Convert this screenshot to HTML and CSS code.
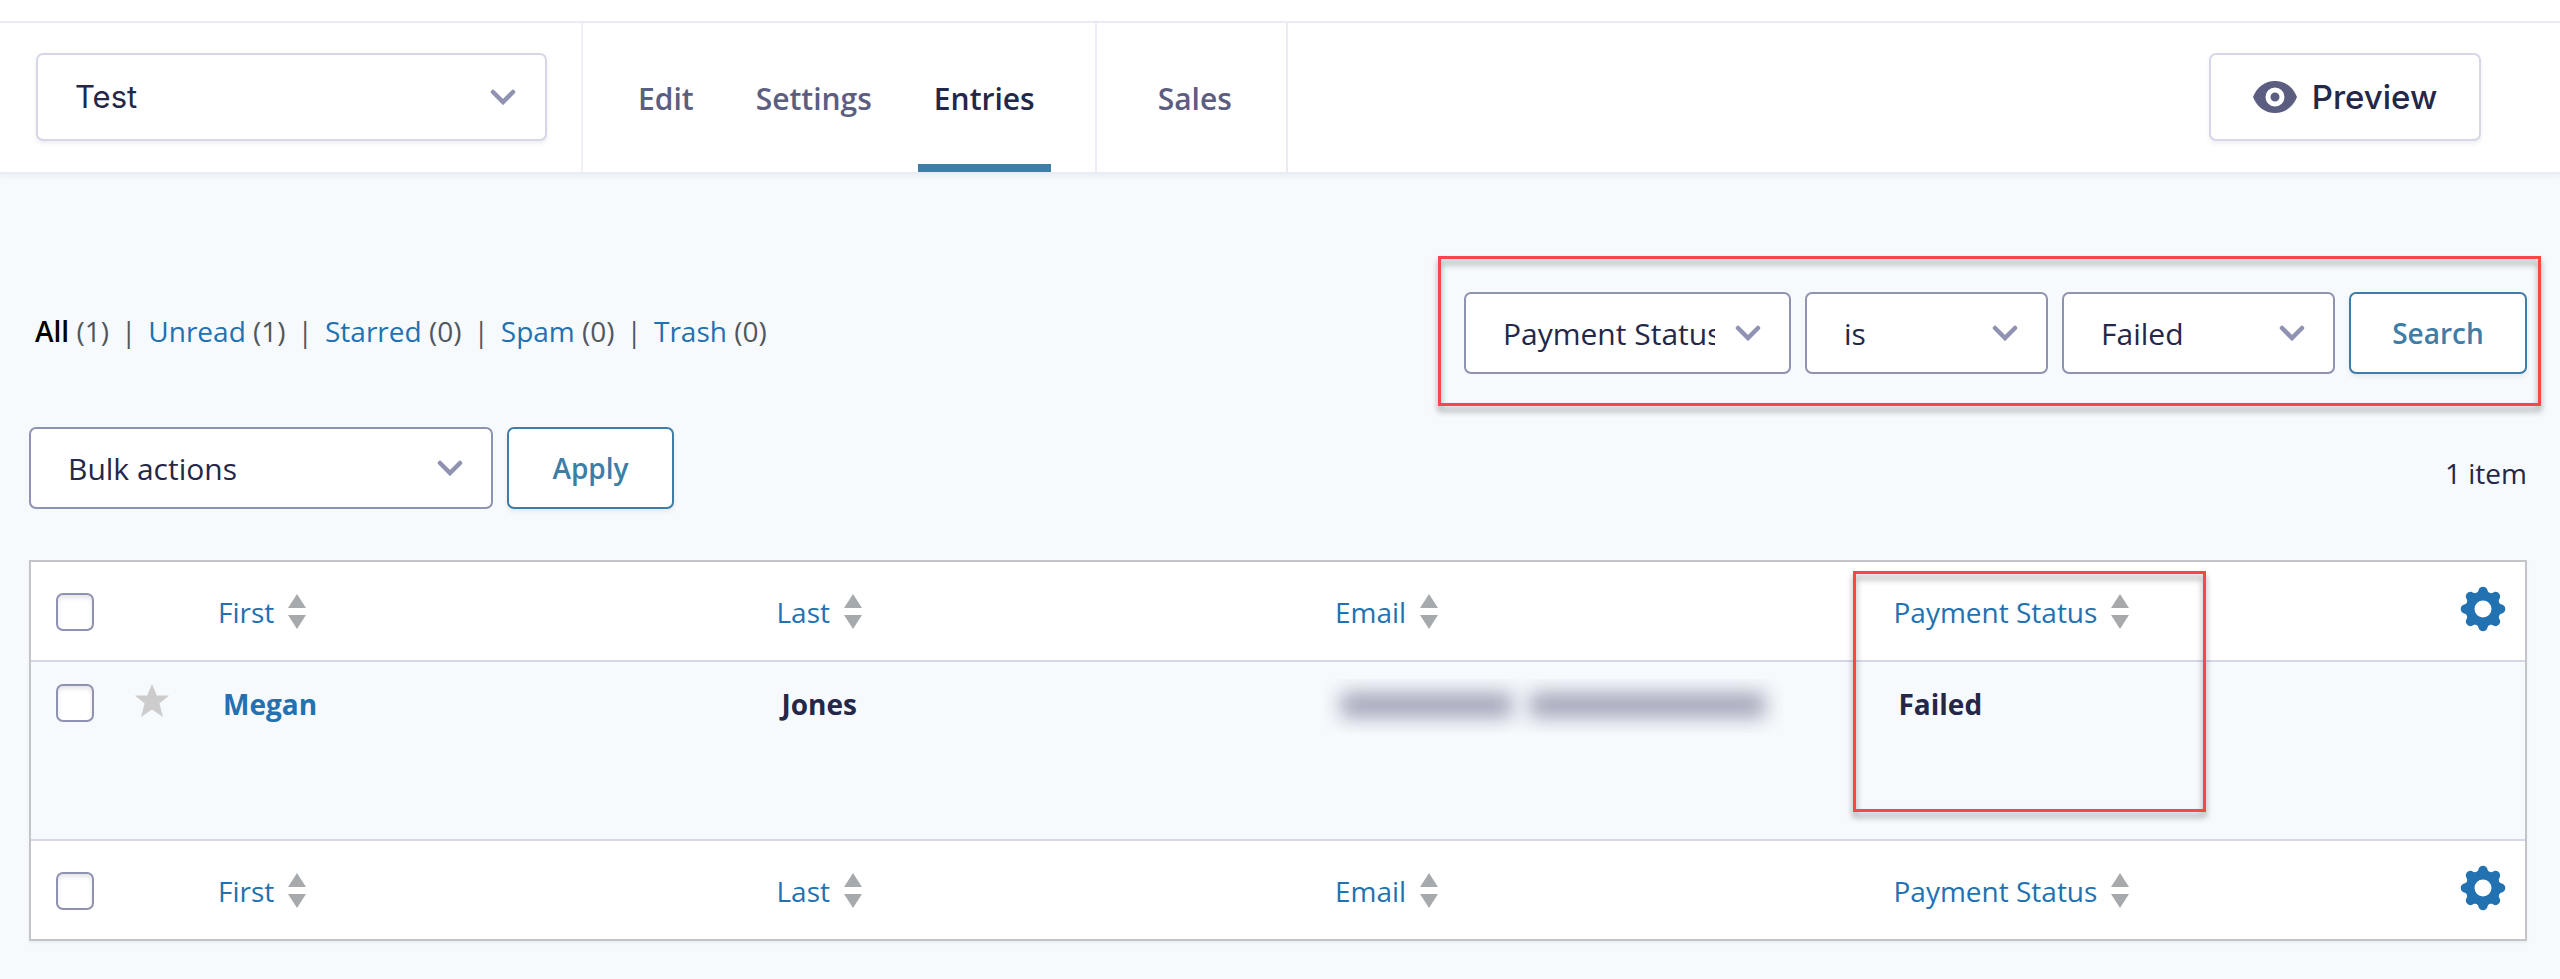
FILE: index.html
```html
<!DOCTYPE html>
<html lang="en">
<head>
<meta charset="utf-8">
<title>Form entries</title>
<link rel="stylesheet" href="styles.css">
</head>
<body>
<svg class="sprite" aria-hidden="true">
  <symbol id="chevron" viewBox="0 0 26 16"><path d="M3 3l10 10L23 3" fill="none" stroke="currentColor" stroke-width="4.500" stroke-linecap="round"/></symbol>
  <symbol id="sort" viewBox="0 0 18 36"><path d="M9 0l9 14H0zM0 21h18L9 35z" fill="currentColor"/></symbol>
  <symbol id="star" viewBox="0 0 34 34"><path d="M17 0l4.800 11.500H34l-9.600 8L28 33l-11-7.500L6 33l3.600-13.500L0 11.500h12.200z" fill="currentColor"/></symbol>
  <symbol id="gear" viewBox="-23 -23 46 46">
    <circle r="13" fill="none" stroke="currentColor" stroke-width="9"/>
    <g id="teeth" fill="currentColor">
      <path id="tooth" d="M-8.500-14.500C-5-16-5-17.500-4.200-19.500C-3-23.200 3-23.200 4.200-19.500C5-17.500 5-16 8.500-14.500L5-12H-5z"/>
      <use href="#tooth" transform="rotate(45)"/><use href="#tooth" transform="rotate(90)"/><use href="#tooth" transform="rotate(135)"/><use href="#tooth" transform="rotate(180)"/><use href="#tooth" transform="rotate(225)"/><use href="#tooth" transform="rotate(270)"/><use href="#tooth" transform="rotate(315)"/>
    </g>
  </symbol>
  <symbol id="eye" viewBox="0 0 44 32"><path fill="currentColor" fill-rule="evenodd" d="M0 16C4 6 12 0 22 0s18 6 22 16c-4 10-12 16-22 16S4 26 0 16zM22 6.500a9.500 9.500 0 1 0 0 19a9.500 9.500 0 1 0 0-19zM22 11.500a4.500 4.500 0 1 1 0 9a4.500 4.500 0 1 1 0-9z"/></symbol>
</svg>

<header class="toolbar">
  <div class="form-switcher">
    <div class="select select-light">
      <select class="select-box" aria-label="Form"><option>Test</option></select>
      <svg class="chevron"><use href="#chevron"/></svg>
    </div>
  </div>
  <nav class="tabs">
    <div class="tab-group">
      <a class="tab" href="#">Edit</a>
      <a class="tab" href="#">Settings</a>
      <a class="tab tab-active" href="#">Entries</a>
    </div>
    <div class="tab-group tab-group-sales"><a class="tab" href="#">Sales</a></div>
  </nav>
  <button class="preview" type="button"><svg class="eye"><use href="#eye"/></svg>Preview</button>
</header>

<main class="content">
  <div class="bar">
    <ul class="views">
      <li class="view"><a class="view-link view-current" href="#">All</a> (1)</li>
      <li class="view"><a class="view-link" href="#">Unread</a> (1)</li>
      <li class="view"><a class="view-link" href="#">Starred</a> (0)</li>
      <li class="view"><a class="view-link" href="#">Spam</a> (0)</li>
      <li class="view"><a class="view-link" href="#">Trash</a> (0)</li>
    </ul>
    <form class="filters">
      <div class="select select-field">
        <select class="select-box" aria-label="Field"><option>Payment Status</option></select>
        <svg class="chevron"><use href="#chevron"/></svg>
      </div>
      <div class="select select-operator">
        <select class="select-box" aria-label="Operator"><option>is</option></select>
        <svg class="chevron"><use href="#chevron"/></svg>
      </div>
      <div class="select select-value">
        <select class="select-box" aria-label="Value"><option>Failed</option></select>
        <svg class="chevron"><use href="#chevron"/></svg>
      </div>
      <button class="action action-search" type="button">Search</button>
    </form>
  </div>

  <div class="bar bulk-bar">
    <div class="bulk">
      <div class="select select-bulk">
        <select class="select-box" aria-label="Bulk actions"><option>Bulk actions</option></select>
        <svg class="chevron"><use href="#chevron"/></svg>
      </div>
      <button class="action action-apply" type="button">Apply</button>
    </div>
    <span class="count">1 item</span>
  </div>

  <div class="table-wrap">
    <table class="entries">
      <colgroup><col class="col-check"><col class="col-star"><col><col><col><col><col class="col-gear"></colgroup>
      <thead>
        <tr>
          <th class="cell"><input class="check" type="checkbox" aria-label="Select all"></th>
          <th class="cell"></th>
          <th class="cell"><a class="sort" href="#">First<svg class="arrows"><use href="#sort"/></svg></a></th>
          <th class="cell"><a class="sort" href="#">Last<svg class="arrows"><use href="#sort"/></svg></a></th>
          <th class="cell"><a class="sort" href="#">Email<svg class="arrows"><use href="#sort"/></svg></a></th>
          <th class="cell status-head"><a class="sort" href="#">Payment Status<svg class="arrows"><use href="#sort"/></svg></a></th>
          <th class="cell cell-gear"><button class="gear-button" type="button" aria-label="Select columns"><svg class="gear"><use href="#gear"/></svg></button></th>
        </tr>
      </thead>
      <tbody>
        <tr class="entry">
          <td class="cell"><input class="check" type="checkbox" aria-label="Select entry"></td>
          <td class="cell"><button class="star-button" type="button" aria-label="Star entry"><svg class="star"><use href="#star"/></svg></button></td>
          <td class="cell value"><a class="entry-link" href="#">Megan</a></td>
          <td class="cell value">Jones</td>
          <td class="cell value"><div class="redacted" role="img" aria-label="Hidden email"><span class="smear smear-short"></span><span class="smear smear-long"></span></div></td>
          <td class="cell value">Failed</td>
          <td class="cell"></td>
        </tr>
      </tbody>
      <tfoot>
        <tr>
          <th class="cell"><input class="check" type="checkbox" aria-label="Select all"></th>
          <th class="cell"></th>
          <th class="cell"><a class="sort" href="#">First<svg class="arrows"><use href="#sort"/></svg></a></th>
          <th class="cell"><a class="sort" href="#">Last<svg class="arrows"><use href="#sort"/></svg></a></th>
          <th class="cell"><a class="sort" href="#">Email<svg class="arrows"><use href="#sort"/></svg></a></th>
          <th class="cell"><a class="sort" href="#">Payment Status<svg class="arrows"><use href="#sort"/></svg></a></th>
          <th class="cell cell-gear"><button class="gear-button" type="button" aria-label="Select columns"><svg class="gear"><use href="#gear"/></svg></button></th>
        </tr>
      </tfoot>
    </table>
  </div>
</main>
</body>
</html>
```
FILE: styles.css
```css
*, *::before, *::after { box-sizing: border-box; }

body {
  margin: 0;
  border-top: 21px solid #fff;
  background: #f6fafd;
  color: #242748;
  font-family: "Open Sans", "Noto Sans", sans-serif;
  font-size: 28px;
  line-height: 40px;
}

a { text-decoration: none; }
svg { display: block; }
.sprite { position: absolute; width: 0; height: 0; }

/* Toolbar */
.toolbar {
  display: flex;
  height: 153px;
  background: #fff;
  border-top: 2px solid #ebebf6;
  border-bottom: 2px solid #ebebf6;
  box-shadow: 0 2px 6px rgba(36, 39, 72, 0.06);
}

.form-switcher {
  padding: 30px 34px 0 36px;
  border-right: 2px solid #f0f0fa;
}

.tabs { display: flex; }

.tab-group {
  display: flex;
  gap: 30px;
  padding: 0 44px 0 39px;
  border-right: 2px solid #ebebf6;
}

.tab-group-sales { padding: 0 38px 0 45px; }

.tab {
  padding: 56px 16px 0;
  color: #5b5e80;
  font-size: 30px;
  font-weight: 600;
}

.tab-active {
  color: #242748;
  border-bottom: 8px solid #3e7da6;
}

.preview {
  display: flex;
  align-items: center;
  justify-content: center;
  gap: 15px;
  width: 272px;
  height: 88px;
  margin: 30px 79px 0 auto;
  padding: 0;
  background: #fff;
  border: 2px solid #d5d7e9;
  border-radius: 7px;
  box-shadow: 0 3px 4px rgba(36, 39, 72, 0.07);
  color: #242748;
  font: 500 33px Inter, sans-serif;
}

.eye { width: 44px; height: 32px; color: #5b5e80; }

/* Form controls */
.select {
  position: relative;
  height: 82px;
}

.select-box {
  width: 100%;
  height: 100%;
  padding: 2px 74px 0 37px;
  appearance: none;
  background: #fff;
  border: 2px solid #9092b2;
  border-radius: 7px;
  color: #242748;
  font: inherit;
  font-size: 30px;
}

.select-light { width: 511px; height: 88px; }

.select-light .select-box {
  padding-top: 0;
  padding-bottom: 2px;
  border-color: #d5d7e9;
  box-shadow: 0 3px 4px rgba(36, 39, 72, 0.07);
  font: 400 31px Inter, sans-serif;
}

.chevron {
  position: absolute;
  top: calc(50% - 8px);
  right: 30px;
  width: 26px;
  height: 16px;
  color: #9092b2;
  pointer-events: none;
}

.select-light .chevron { right: 31px; }

.select-field { width: 327px; }
.select-operator { width: 243px; }
.select-value { width: 273px; }
.select-bulk { width: 464px; }

.action {
  height: 82px;
  padding: 0;
  background: #fff;
  border: 2px solid #3e7da6;
  border-radius: 7px;
  box-shadow: 0 3px 4px rgba(36, 39, 72, 0.07);
  color: #3e7da6;
  font-family: inherit;
  font-size: 28px;
  font-weight: 600;
}

.action-search { width: 178px; }
.action-apply { width: 167px; }

/* Entry list */
.content { padding: 82px 33px 38px 29px; }

.bar {
  display: flex;
  align-items: center;
  justify-content: space-between;
}

.views {
  display: flex;
  margin: 0;
  padding: 0 0 0 6px;
  list-style: none;
  color: #50575e;
}

.view + .view::before { content: "|"; margin: 0 12px; }
.view-link { color: #2271b1; }
.view-current { color: #000; font-weight: 600; }

.filters {
  position: relative;
  display: flex;
  gap: 14px;
  padding: 36px 0 32px;
}

.filters::after,
.status-head::after {
  content: "";
  position: absolute;
  border: 3px solid #f94646;
  filter: drop-shadow(0 5px 3px rgba(0, 0, 0, 0.4));
  pointer-events: none;
}

.filters::after { inset: 0 -14px 0 -26px; }

.bulk-bar { padding-top: 21px; }
.bulk { display: flex; gap: 14px; }
.count { padding-top: 10px; }

.table-wrap {
  margin-top: 51px;
  box-shadow: 0 2px 3px rgba(0, 0, 0, 0.05);
}

.entries {
  width: 100%;
  table-layout: fixed;
  border: 2px solid #c3c4c7;
  border-spacing: 0;
  background: #fff;
}

.col-check { width: 90px; }
.col-star { width: 83px; }
.col-gear { width: 87px; }

.cell {
  height: 98px;
  padding: 2px 14px 0;
  font-weight: 400;
  text-align: left;
  vertical-align: middle;
}

.entry { background: #f6fafd; }

.entry .cell {
  height: 181px;
  padding-top: 22px;
  border-top: 2px solid #d5d7e9;
  border-bottom: 2px solid #d5d7e9;
  vertical-align: top;
}

.entry .value { padding-left: 19px; font-weight: 700; }
.entry-link { color: #2271b1; }

.check {
  display: block;
  width: 38px;
  height: 38px;
  margin: 0 0 0 11px;
  appearance: none;
  background: #fff;
  border: 2px solid #9092b2;
  border-radius: 7px;
  box-shadow: inset 0 3px 4px rgba(0, 0, 0, 0.1);
}

.sort {
  display: inline-flex;
  align-items: center;
  gap: 14px;
  color: #2271b1;
}

.arrows { width: 18px; height: 36px; color: #a7aaad; }

.star-button,
.gear-button {
  display: block;
  padding: 0;
  background: none;
  border: 0;
}

.star { width: 34px; height: 34px; color: #ccc; }
.gear { width: 46px; height: 46px; color: #2271b1; }
.cell-gear { padding: 0 0 4px 22px; }

.status-head { position: relative; }

.status-head::after {
  top: 9px;
  left: -27px;
  width: 353px;
  height: 241px;
}

.redacted {
  display: flex;
  gap: 18px;
  width: 460px;
  height: 54px;
  margin: -5px 0 0 -17px;
  padding: 14px 18px;
  overflow: hidden;
}

.smear {
  height: 24px;
  background: #9fa1b5;
  filter: blur(10px);
}

.smear-short { width: 172px; }
.smear-long { width: 236px; }
```
